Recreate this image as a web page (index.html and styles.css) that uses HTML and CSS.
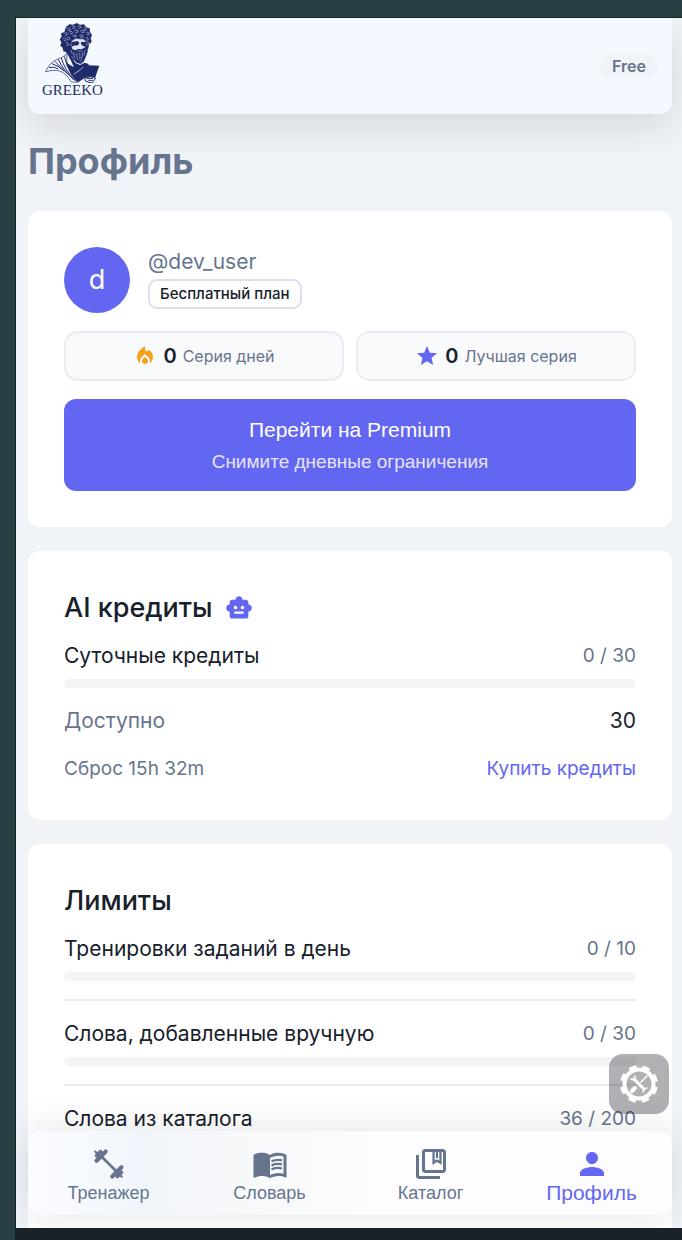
FILE: index.html
```html
<!DOCTYPE html>
<html lang="ru">
<head>
	<meta charset="UTF-8">
	<meta name="viewport" content="width=device-width, initial-scale=1.0">
	<link rel="stylesheet" href="styles.css">
	<title>Greeko</title>
</head>
<body>
	<div class="app">
		<header class="header">
			<a class="logo" href="#" aria-label="Greeko">
				<svg class="logo-pic" viewBox="33 22 165 180" aria-hidden="true">
					<!-- hair -->
					<path fill="#202b6b" d="M96 34l10-8 12 1 10-5 10 5 12-1 7 9 10 3 1 11 6 9-4 10 3 10-8 9-2 12-8 5-10-19-8-9-18 1-10 9-3 15 3 21-10-3-2-9-9-3-2-11-7-6 3-10-5-9 6-8-2-10 10-4z"/>
					<!-- face and beard -->
					<path fill="#dfe5f4" stroke="#202b6b" stroke-width="2" d="M112 76l13-8 24 2 10 10-1 24-8 18-20 4-18-24z"/>
					<path fill="#202b6b" d="M113 79l18-3 5 6-4 7-14 1-5 4zM141 79l17 0-1 14-9-1-7-6zM101 82l8 4 6 14 8 4 10-4 8 1 8-3 8-6 3-6 1 22-6 17-5 12-10 8-12-4-8-8-10-6-7-17z"/>
					<path fill="none" stroke="#a9b3d6" stroke-width="2" d="M130 106h16M111 103l4 13M119 109l3 17M128 112l2 21M137 112l1 22M146 110l-3 20M153 104l-3 16M112 121l8 9M139 138l6-6"/>
					<!-- curls -->
					<path fill="none" stroke="#b9c2df" stroke-width="2" stroke-linecap="round" d="M99 39q6-6 9 0t-6 5M114 32q7-4 9 2t-7 4M132 31q7-4 9 2t-7 4M151 35q7 0 6 6t-7 1M90 53q5-6 9 0t-5 6M105 49q6-6 10 0t-7 6M122 45q6-5 10 0t-7 6M140 46q6-5 10 0t-7 6M158 50q6-3 8 3t-7 4M87 69q4-6 8 0t-4 6M99 65q6-4 8 2t-7 5M117 60q6-5 10 0t-7 3M137 60q7-4 10 1t-7 4M156 67q6-4 7 2t-5 5M96 82q5-5 7 2t-4 6M161 81q6-3 5 3t-5 3"/>
					<!-- neck and robe -->
					<path fill="#202b6b" d="M103 111l12 17 9 14 14 6 14-7 12 4-7 38-24 17-25-20-15-28z"/>
					<path fill="#f4f8ff" d="M100 114l11 21 9 20-18-11-8-21z"/>
					<path fill="#f4f8ff" stroke="#202b6b" stroke-width="2" d="M99 115q-14 11-31 17-22 9-33 36l20-4q34-5 57 35l18 1-18-23-14-30z"/>
					<path fill="none" stroke="#202b6b" stroke-width="3" d="M91 122q9 36 38 76M82 127q10 36 41 68M73 131q14 32 47 62M63 137q18 19 38 38M54 144q18 5 36 22M45 156q16-5 28 4"/>
					<path fill="none" stroke="#f4f8ff" stroke-width="2" d="M119 176l20-14 12-12"/>
					<!-- book -->
					<path fill="#202b6b" d="M148 148l48 2-12 34-36-1z"/>
					<path fill="#f4f8ff" stroke="#202b6b" stroke-width="3" d="M153 186l18-3 14 4-11 15-12-3-9-4z"/>
					<path fill="none" stroke="#202b6b" stroke-width="3" d="M157 188h20M163 194h13"/>
				</svg>
				<span class="logo-text">GREEKO</span>
			</a>
			<span class="chip">Free</span>
		</header>

		<main class="content">
			<h1>Профиль</h1>

			<section class="card">
				<div class="user">
					<div class="avatar">d</div>
					<div class="user-info">
						<span class="user-name">@dev_user</span>
						<span class="plan">Бесплатный план</span>
					</div>
				</div>
				<div class="stats">
					<div class="stat">
						<svg class="stat-icon fire" viewBox="0 0 24 24" aria-hidden="true"><path d="M16 6l-.44.55C14.38 8.02 12 7.19 12 5.3V2S4 6 4 13c0 2.92 1.56 5.47 3.89 6.86-.56-.79-.89-1.76-.89-2.8 0-1.32.52-2.56 1.47-3.5L12 10.1l3.53 3.47c.95.93 1.47 2.17 1.47 3.5 0 1.02-.31 1.96-.85 2.75 1.89-1.15 3.29-3.06 3.71-5.3.66-3.55-1.07-6.9-3.86-8.52zM12 12.9l-2.13 2.09C9.31 15.55 9 16.28 9 17.06 9 18.68 10.35 20 12 20s3-1.32 3-2.94c0-.78-.31-1.52-.87-2.07L12 12.9z"/></svg>
						<b>0</b>
						<span>Серия дней</span>
					</div>
					<div class="stat">
						<svg class="stat-icon" viewBox="0 0 24 24" aria-hidden="true"><path d="M12 17.27L18.18 21l-1.64-7.03L22 9.24l-7.19-.61L12 2 9.19 8.63 2 9.24l5.46 4.73L5.82 21z"/></svg>
						<b>0</b>
						<span>Лучшая серия</span>
					</div>
				</div>
				<button class="premium" type="button">
					<span>Перейти на Premium</span>
					<small>Снимите дневные ограничения</small>
				</button>
			</section>

			<section class="card">
				<h2>AI кредиты
					<svg class="robot" viewBox="0 0 24 24" aria-hidden="true"><path d="M20 9V7c0-1.1-.9-2-2-2h-3c0-1.66-1.34-3-3-3S9 3.34 9 5H6c-1.1 0-2 .9-2 2v2c-1.66 0-3 1.34-3 3s1.34 3 3 3v4c0 1.1.9 2 2 2h12c1.1 0 2-.9 2-2v-4c1.66 0 3-1.34 3-3s-1.34-3-3-3zM7.5 11.5c0-.83.67-1.5 1.5-1.5s1.5.67 1.5 1.5S9.83 13 9 13s-1.5-.67-1.5-1.5zM16 17H8v-2h8v2zm-1-4c-.83 0-1.5-.67-1.5-1.5S14.17 10 15 10s1.5.67 1.5 1.5S15.83 13 15 13z"/></svg>
				</h2>
				<div class="row">
					<label for="daily">Суточные кредиты</label>
					<span class="count">0 / 30</span>
				</div>
				<progress id="daily" value="0" max="30"></progress>
				<div class="row spaced">
					<span class="muted">Доступно</span>
					<span>30</span>
				</div>
				<div class="row spaced">
					<span class="count">Сброс 15h 32m</span>
					<a class="buy" href="#">Купить кредиты</a>
				</div>
			</section>

			<section class="card">
				<h2>Лимиты</h2>
				<ul class="limits">
					<li>
						<div class="row">
							<label for="train">Тренировки заданий в день</label>
							<span class="count">0 / 10</span>
						</div>
						<progress id="train" value="0" max="10"></progress>
					</li>
					<li>
						<div class="row">
							<label for="manual">Слова, добавленные вручную</label>
							<span class="count">0 / 30</span>
						</div>
						<progress id="manual" value="0" max="30"></progress>
					</li>
					<li>
						<div class="row">
							<label for="catalog">Слова из каталога</label>
							<span class="count">36 / 200</span>
						</div>
						<progress id="catalog" value="36" max="200"></progress>
					</li>
				</ul>
			</section>
		</main>

		<button class="tools" type="button" aria-label="Инструменты">
			<svg viewBox="0 0 40 40" aria-hidden="true">
				<circle cx="20" cy="20" r="14.5" fill="none" stroke="#fff" stroke-width="4"/>
				<circle cx="20" cy="20" r="17" fill="none" stroke="#fff" stroke-width="4" stroke-dasharray="7.35 6" stroke-dashoffset="-3"/>
				<path fill="none" stroke="#fff" stroke-width="3" stroke-linecap="round" d="M15 15l10 10"/>
				<path fill="none" stroke="#fff" stroke-width="4" stroke-linecap="round" d="M13 27l3-3"/>
				<path fill="none" stroke="#fff" stroke-width="1.5" stroke-linecap="round" d="M22 18l6-6M12 15l3 1 1-4M24 28l1-3 3-1"/>
			</svg>
		</button>

		<nav class="nav">
			<a href="#">
				<svg viewBox="0 0 24 24" aria-hidden="true">
					<g fill="none" stroke="currentColor" stroke-linecap="round">
						<path stroke-width="1.8" d="M7 7l10 10"/>
						<path stroke-width="2.8" d="M3.7 9.8l6.1-6.1M14.2 20.3l6.1-6.1"/>
						<path stroke-width="2.6" d="M3.8 6.4l2.6-2.6M17.6 20.2l2.6-2.6"/>
						<path stroke-width="1.4" d="M2.8 3.7l2 2M19.2 19.2l1.3 1.3"/>
					</g>
				</svg>
				<span>Тренажер</span>
			</a>
			<a href="#">
				<svg viewBox="0 0 24 24" aria-hidden="true">
					<path d="M21 5c-1.11-.35-2.33-.5-3.5-.5-1.95 0-4.05.4-5.5 1.5-1.45-1.1-3.55-1.5-5.5-1.5S2.45 4.9 1 6v14.65c0 .25.25.5.5.5.1 0 .15-.05.25-.05C3.1 20.45 5.05 20 6.5 20c1.95 0 4.05.4 5.5 1.5 1.35-.85 3.8-1.5 5.5-1.5 1.65 0 3.35.3 4.75 1.05.1.05.15.05.25.05.25 0 .5-.25.5-.5V6c-.6-.45-1.25-.75-2-1zm0 13.5c-1.1-.35-2.3-.5-3.5-.5-1.7 0-4.15.65-5.5 1.5V8c1.35-.85 3.8-1.5 5.5-1.5 1.2 0 2.4.15 3.5.5v11.5z"/>
					<path fill="none" stroke="currentColor" stroke-width="1.5" d="M13 10.2q3.500-1.500 7-.6M13 12.900q3.500-1.500 7-.6M13 15.600q3.500-1.500 7-.6"/>
				</svg>
				<span>Словарь</span>
			</a>
			<a href="#">
				<svg viewBox="0 0 24 24" aria-hidden="true">
					<path d="M4 6H2v14c0 1.1.9 2 2 2h14v-2H4V6zM20 2H8c-1.1 0-2 .9-2 2v12c0 1.1.9 2 2 2h12c1.1 0 2-.9 2-2V4c0-1.1-.9-2-2-2zm0 14H8V4h12v12z"/>
					<path fill="none" stroke="currentColor" stroke-width="1.5" d="M13.7 3v8.2l2.3-1.5 2.3 1.5V3M16 3v5"/>
				</svg>
				<span>Каталог</span>
			</a>
			<a class="active" href="#" aria-current="page">
				<svg viewBox="0 0 24 24" aria-hidden="true"><path d="M12 12c2.21 0 4-1.79 4-4s-1.79-4-4-4-4 1.79-4 4 1.79 4 4 4zm0 2c-2.67 0-8 1.34-8 4v2h16v-2c0-2.66-5.33-4-8-4z"/></svg>
				<span>Профиль</span>
			</a>
		</nav>
	</div>
</body>
</html>
```
FILE: styles.css
```css
* {
  box-sizing: border-box;
  margin: 0;
  padding: 0;
}
html {
  --ink: #17212b;
  --muted: #67748e;
  --accent: #6366f1;
  --line: #e9ecf2;
}
body {
  display: flex;
  height: 100vh;
  padding: 18px 0 0 16px;
  overflow: hidden;
  background: #284044;
  color: var(--ink);
  font: 400 21px/30px Inter, "Liberation Sans", sans-serif;
}
a {
  color: inherit;
  text-decoration: none;
}
svg {
  display: block;
  fill: currentColor;
}
button {
  border: 0;
  font: 400 21px/30px "Liberation Sans", Arial, sans-serif;
  cursor: pointer;
}
.app {
  position: relative;
  flex: 1;
  min-width: 0;
  overflow: hidden;
  border-bottom: 12px solid #1a2129;
  box-shadow: 0 0 0 1px #12232b;
  background: #f0f3f8;
}

/* top bar */
.header {
  display: flex;
  align-items: center;
  justify-content: space-between;
  height: 96px;
  margin: 0 10px 0 12px;
  padding: 0 14px;
  border-radius: 0 0 12px 12px;
  box-shadow: 0 12px 40px rgba(20, 25, 35, 0.12);
  background: #f4f8ff;
}
.logo {
  display: flex;
  flex-direction: column;
  align-items: center;
  align-self: flex-start;
  padding-top: 5px;
  color: #202b5c;
}
.logo-pic {
  width: 55px;
  height: 60px;
}
.logo-text {
  font: 400 15px/15px "Liberation Serif", serif;
}
.chip {
  padding: 0 12px;
  border-radius: 12px;
  background: #f0f3f8;
  color: var(--muted);
  font-size: 16px;
  font-weight: 600;
  line-height: 24px;
}

/* page */
.content {
  display: flex;
  flex-direction: column;
  gap: 24px;
  padding: 20px 10px 0 12px;
}
h1 {
  margin-bottom: -1px;
  color: var(--muted);
  font-size: 36px;
  font-weight: 700;
  line-height: 54px;
}
h2 {
  display: flex;
  align-items: center;
  gap: 12px;
  margin-bottom: 12px;
  font-size: 27px;
  font-weight: 500;
  line-height: 42px;
}
.card {
  padding: 36px;
  border-radius: 12px;
  background: #fff;
}
.user {
  display: flex;
  align-items: flex-start;
  gap: 18px;
}
.avatar {
  width: 66px;
  height: 66px;
  border-radius: 50%;
  background: var(--accent);
  color: #fff;
  font-size: 27px;
  line-height: 66px;
  text-align: center;
}
.user-info {
  display: flex;
  flex-direction: column;
  align-items: flex-start;
  gap: 2px;
}
.user-name {
  color: var(--muted);
}
.plan {
  padding: 0 10px;
  border: 2px solid #dcdef2;
  border-radius: 9px;
  font-size: 15px;
  font-weight: 500;
  line-height: 26px;
}
.stats {
  display: grid;
  grid-template-columns: 1fr 1fr;
  gap: 12px;
  margin: 18px 0;
}
.stat {
  display: flex;
  align-items: center;
  justify-content: center;
  gap: 6px;
  height: 50px;
  border: 2px solid var(--line);
  border-radius: 14px;
  background: #f9fafc;
  color: var(--muted);
  font-size: 16px;
}
.stat b {
  color: var(--ink);
  font-size: 20px;
  font-weight: 600;
}
.stat-icon {
  width: 24px;
  height: 24px;
  color: var(--accent);
}
.stat-icon.fire {
  color: #f9a01b;
}
.premium {
  display: flex;
  flex-direction: column;
  align-items: center;
  justify-content: center;
  width: 100%;
  height: 92px;
  border-radius: 12px;
  background: var(--accent);
  color: #fff;
}
.premium span {
  line-height: 34px;
}
.premium small {
  color: #e3e4fd;
  font-size: 19px;
}
.robot {
  width: 28px;
  height: 28px;
  color: var(--accent);
}
.row {
  display: flex;
  justify-content: space-between;
}
.row.spaced {
  margin-top: 18px;
}
.muted, .count {
  color: var(--muted);
}
.count, .buy {
  font-size: 19px;
}
.buy {
  color: var(--accent);
}
progress {
  -webkit-appearance: none;
  appearance: none;
  display: block;
  width: 100%;
  height: 9px;
  margin-top: 8px;
  overflow: hidden;
  border: 0;
  border-radius: 5px;
  background: #f4f4f5;
}
progress::-webkit-progress-bar {
  background: #f4f4f5;
}
progress::-webkit-progress-value {
  background: var(--accent);
}
progress::-moz-progress-bar {
  background: var(--accent);
}
.limits {
  padding-bottom: 60px;
  list-style: none;
}
.limits li + li {
  margin-top: 18px;
  padding-top: 18px;
  border-top: 2px solid var(--line);
}

/* floating parts */
.tools {
  position: absolute;
  right: 13px;
  bottom: 114px;
  display: grid;
  place-items: center;
  width: 60px;
  height: 60px;
  border-radius: 14px;
  background: rgba(28, 28, 44, 0.35);
}
.tools svg {
  width: 40px;
  height: 40px;
}
.nav {
  position: absolute;
  right: 10px;
  bottom: 13px;
  left: 12px;
  display: grid;
  grid-template-columns: repeat(4, 1fr);
  height: 84px;
  padding-top: 3px;
  border-radius: 12px;
  box-shadow: 0 0 40px rgba(20, 25, 35, 0.12);
  background: linear-gradient(90deg, #fafcff, #f1f5fb 18%, #f7f8fa 32%, #fdfdff 55%, #fdfdff);
}
.nav a {
  display: flex;
  flex-direction: column;
  align-items: center;
  justify-content: center;
  color: var(--muted);
  font: 400 18px/22px "Liberation Sans", Arial, sans-serif;
}
.nav svg {
  width: 36px;
  height: 36px;
}
.nav .active {
  color: var(--accent);
  font-size: 21px;
}
```
